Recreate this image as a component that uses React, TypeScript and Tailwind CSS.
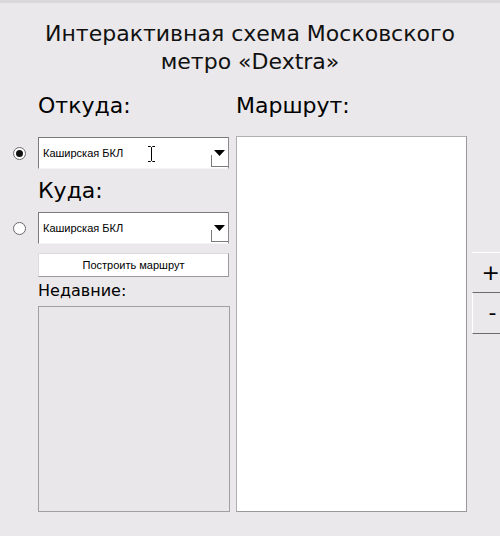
import { ReactNode } from "react";

const ui = "font-['Tahoma','DejaVu_Sans','Liberation_Sans',sans-serif]";
const small = "font-['Liberation_Sans','Arial',sans-serif]";

function Radio({ checked }: { checked?: boolean }) {
  return (
    <div className="w-[38px] flex justify-center">
      <span className="w-[13px] h-[13px] rounded-full border border-[#6a6a6a] bg-white flex items-center justify-center">
        {checked && <span className="w-[7px] h-[7px] rounded-full bg-[#111]" />}
      </span>
    </div>
  );
}

// I-beam text cursor over the first box
function Caret() {
  return (
    <svg className="absolute left-[108px] top-[8px]" width="9" height="16" viewBox="0 0 9 16">
      <path d="M1 0.5 H3.5 L4.5 1.5 L5.5 0.5 H8 M4.5 1.5 V14.5 M1 15.5 H3.5 L4.5 14.5 L5.5 15.5 H8" stroke="#000" fill="none" strokeWidth="1" />
    </svg>
  );
}

function Combo({ value, caret }: { value: string; caret?: boolean }) {
  return (
    <div className="relative w-[191px] h-[32px] bg-white border border-t-[#7a7a7a] border-l-[#7a7a7a] border-r-[#8a8a8a] border-b-[#f4f4f4] flex items-center">
      <span className={`${small} text-[11px] text-black pl-[4px] flex-1`}>{value}</span>
      {caret && <Caret />}
      <div className="relative w-[17px] h-[30px] flex items-center justify-center">
        <svg width="11" height="7" viewBox="0 0 11 7">
          <path d="M0 0 H11 L5.5 6 Z" fill="#000" />
        </svg>
        <span className="absolute left-0 bottom-[1px] w-[17px] h-[12px] border-l border-b border-[#7a7a7a]" />
      </div>
    </div>
  );
}

function Label({ children, size = "text-[22px]" }: { children: ReactNode; size?: string }) {
  return <div className={`${ui} ${size} text-black leading-none`}>{children}</div>;
}

export default function App() {
  return (
    <div className="w-[500px] h-[536px] bg-[#eae8ea] overflow-hidden border-t-[3px] border-[#d9d7d9]">
      <div className={`${ui} text-[22px] leading-[28px] text-[#111] text-center pt-[17px]`}>
        Интерактивная схема Московского
        <br />
        метро «Dextra»
      </div>

      <div className="flex mt-[19px]">
        {/* left */}
        <div className="flex flex-col w-[236px]">
          <div className="pl-[38px] h-[28px]">
            <Label>Откуда:</Label>
          </div>
          <div className="flex items-center mt-[14px]">
            <Radio checked />
            <Combo value="Каширская БКЛ" caret />
          </div>
          <div className="pl-[38px] mt-[11px] h-[30px]">
            <Label>Куда:</Label>
          </div>
          <div className="flex items-center mt-[2px]">
            <Radio />
            <Combo value="Каширская БКЛ" />
          </div>
          <div className="pl-[38px] mt-[7px]">
            <button className={`${small} w-[191px] h-[24px] bg-white border border-[#dcdcdc] border-b-[#9a9a9a] border-r-[#9a9a9a] text-[11px] text-black`}>
              Построить маршрут
            </button>
          </div>
          <div className="pl-[38px] mt-[6px]">
            <Label size="text-[16px]">Недавние:</Label>
          </div>
          <div className="pl-[38px] mt-[7px]">
            <div className="w-[192px] h-[206px] border border-[#a0a0a0] bg-[#e9e7e9]" />
          </div>
        </div>

        {/* route */}
        <div className="flex flex-col w-[231px]">
          <div className="h-[28px]">
            <Label>Маршрут:</Label>
          </div>
          <div className="mt-[13px] h-[376px] bg-white border border-[#b0b0b0] border-r-[#999] border-b-[#999]" />
        </div>

        {/* zoom */}
        <div className="flex flex-col pt-[157px] pl-[5px] flex-1">
          <div className="h-[40px] border-t border-white flex items-center justify-end">
            <span className={`${ui} text-[22px] leading-none text-black`}>+</span>
          </div>
          <div className="h-[42px] border-y border-l border-t-[#6c6c6c] border-b-[#6c6c6c] border-l-white flex items-center justify-center">
            <span className={`${ui} text-[22px] leading-none text-black pl-[12px]`}>-</span>
          </div>
        </div>
      </div>
    </div>
  );
}
